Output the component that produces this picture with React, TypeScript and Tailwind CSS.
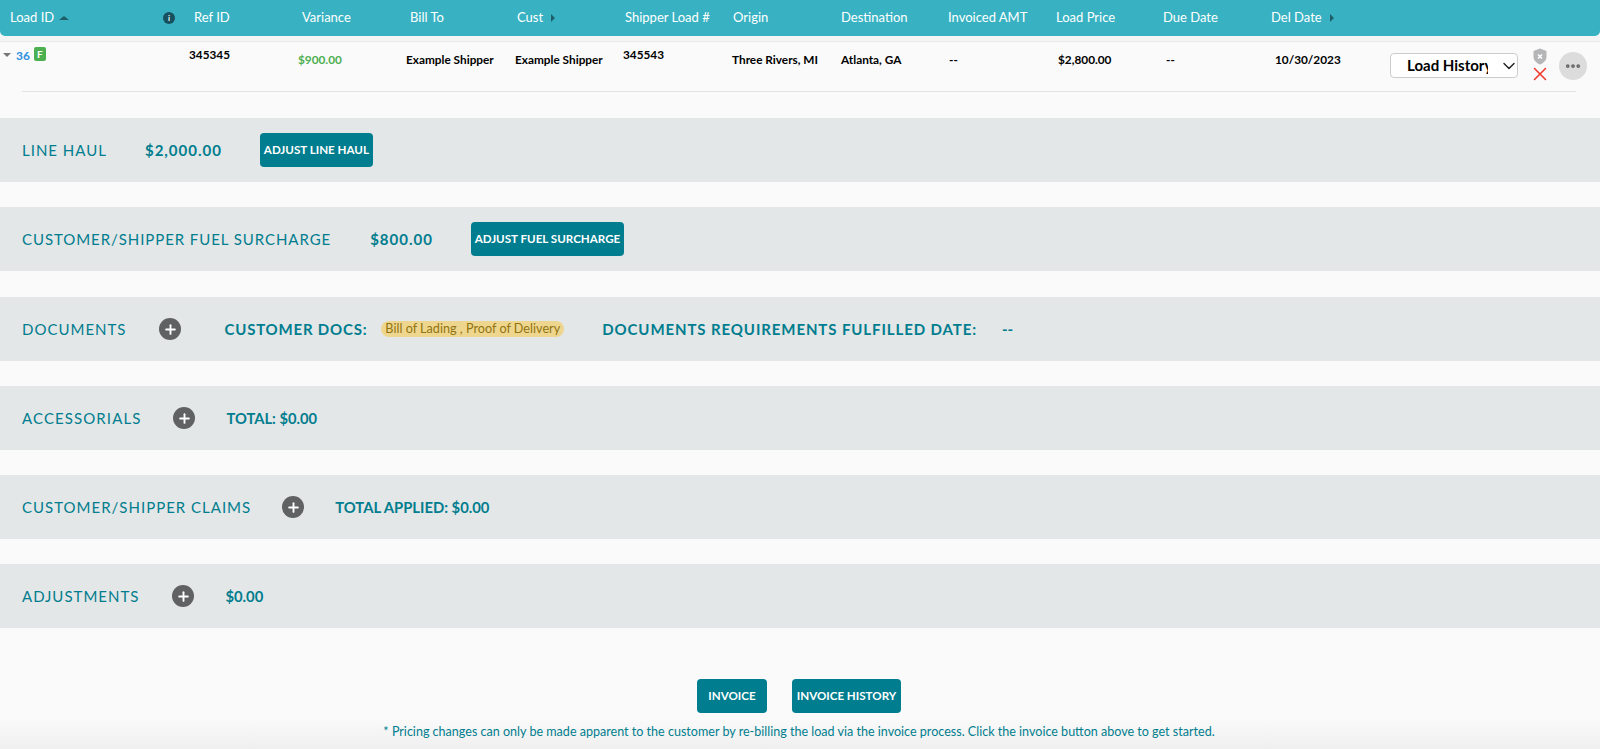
import { Plus, X, ChevronDown, MoreHorizontal } from "lucide-react";

const headCols = [
  { label: "Load ID", width: "w-[184px]", arrow: "up" },
  { label: "Ref ID", width: "w-[108px]" },
  { label: "Variance", width: "w-[108px]" },
  { label: "Bill To", width: "w-[107px]" },
  { label: "Cust", width: "w-[108px]", arrow: "right" },
  { label: "Shipper Load #", width: "w-[108px]" },
  { label: "Origin", width: "w-[108px]" },
  { label: "Destination", width: "w-[107px]" },
  { label: "Invoiced AMT", width: "w-[108px]" },
  { label: "Load Price", width: "w-[107px]" },
  { label: "Due Date", width: "w-[108px]" },
  { label: "Del Date", width: "w-[120px]", arrow: "right" },
];

const rowCols = [
  { value: "Example Shipper", width: "w-[109px]" },
  { value: "Example Shipper", width: "w-[108px]" },
];

const rowColsAfter = [
  { value: "Three Rivers, MI", width: "w-[109px]" },
  { value: "Atlanta, GA", width: "w-[108px]" },
  { value: "--", width: "w-[109px]" },
  { value: "$2,800.00", width: "w-[108px]" },
  { value: "--", width: "w-[109px]" },
  { value: "10/30/2023", width: "w-[115px]" },
];

function PlusButton() {
  return (
    <span className="flex h-[22px] w-[22px] shrink-0 items-center justify-center rounded-full bg-[#5f6163]">
      <Plus size={15} color="#fff" strokeWidth={3} />
    </span>
  );
}

function Band({ children }: { children: React.ReactNode }) {
  return (
    <div className="flex h-[64px] items-center bg-[#e3e7e8] pl-[22px] text-[#007d8e]">
      {children}
    </div>
  );
}

function BandLabel({ text, className }: { text: string; className: string }) {
  return <span className={`text-[15px] uppercase ${className}`}>{text}</span>;
}

function TealButton({ text, className }: { text: string; className: string }) {
  return (
    <button className={`h-[34px] rounded-[4px] bg-[#007d8e] text-[11.6px] font-bold text-white uppercase ${className}`}>
      {text}
    </button>
  );
}

export default function App() {
  return (
    <div className="relative h-[749px] overflow-hidden bg-[#fafafa] font-['Lato','Open_Sans',sans-serif]">
      <div className="flex h-[36px] items-center rounded-b-[5px] bg-[#38b2c2] pb-[1px] pl-[10px] text-[13px] text-white">
        {headCols.map((col) => (
          <div key={col.label} className={`relative flex shrink-0 items-center gap-[5px] ${col.width}`}>
            {col.label}
            {col.arrow === "up" && (
              <span className="h-0 w-0 border-x-[5px] border-b-[4px] border-x-transparent border-b-[#1f5f6b]" />
            )}
            {col.arrow === "right" && (
              <span className="ml-[3px] h-0 w-0 border-y-[4px] border-l-[4px] border-y-transparent border-l-[#1f5f6b]" />
            )}
            {col.label === "Load ID" && (
              <span className="absolute left-[153px] top-[4px] flex h-[12px] w-[12px] items-center justify-center rounded-full bg-[#17505e] text-[8px] font-bold leading-none text-white">
                i
              </span>
            )}
          </div>
        ))}
      </div>

      <div className="h-[6px] border-b border-[#e8eaea] bg-[#f3f4f4]" />

      <div className="ml-[22px] mr-[24px] flex h-[50px] border-b border-[#e2e4e4] text-[11.8px] font-bold text-black">
        <div className="ml-[-19px] flex w-[186px] shrink-0 items-start gap-[4px] pt-[5px]">
          <span className="mt-[6px] h-0 w-0 border-x-[4px] border-t-[4px] border-x-transparent border-t-[#777]" />
          <span className="ml-[1px] text-[12px] text-[#2f8fe0]">36</span>
          <span className="flex h-[14px] w-[12px] items-center justify-center rounded-[2px] bg-[#4caf50] text-[10px] leading-none text-white">
            F
          </span>
        </div>
        <div className="w-[109px] shrink-0 pt-[4px]">345345</div>
        <div className="w-[108px] shrink-0 pt-[9px] text-[#4caf50]">$900.00</div>
        {rowCols.map((col, i) => (
          <div key={i} className={`shrink-0 pt-[9px] ${col.width}`}>
            {col.value}
          </div>
        ))}
        <div className="w-[109px] shrink-0 pt-[4px]">345543</div>
        {rowColsAfter.map((col, i) => (
          <div key={i} className={`shrink-0 pt-[9px] ${col.width}`}>
            {col.value}
          </div>
        ))}
        <div className="relative mt-[11px] flex h-[25px] w-[128px] shrink-0 items-center overflow-hidden rounded-[4px] border border-[#ccc] bg-white pl-[16px] text-[15px]">
          <span className="w-[81px] overflow-hidden whitespace-nowrap">Load History</span>
          <ChevronDown className="absolute right-[-2px]" size={20} strokeWidth={1.7} color="#222" />
        </div>
        <div className="ml-[13px] flex w-[18px] shrink-0 flex-col items-center pt-[6px]">
          <svg width="14" height="17" viewBox="0 0 14 17">
            <path d="M7 0.5 L13.5 3 V8.5 C13.5 12.5 10.5 15 7 16.5 C3.5 15 0.5 12.5 0.5 8.5 V3 Z" fill="#b4b6b8" />
            <path d="M5 6.5 L9 10.5 M9 6.5 L5 10.5" stroke="#fff" strokeWidth="1.5" />
          </svg>
          <X size={22} color="#ef3b2c" strokeWidth={1.7} className="mt-[-2px]" />
        </div>
        <div className="ml-[10px] mt-[10px] flex h-[28px] w-[28px] shrink-0 items-center justify-center rounded-full bg-[#dcdcdc]">
          <MoreHorizontal size={18} color="#666" strokeWidth={3} />
        </div>
      </div>

      <div className="mt-[26px] flex flex-col gap-[25px]">
        <Band>
          <BandLabel text="Line Haul" className="mr-[38px] tracking-[1px]" />
          <span className="mr-[38px] text-[15px] font-bold tracking-[1px]">$2,000.00</span>
          <TealButton text="Adjust Line Haul" className="w-[113px]" />
        </Band>
        <Band>
          <BandLabel text="Customer/Shipper Fuel Surcharge" className="mr-[39px] tracking-[0.93px]" />
          <span className="mr-[38px] text-[15px] font-bold tracking-[1px]">$800.00</span>
          <TealButton text="Adjust Fuel Surcharge" className="w-[153px]" />
        </Band>
        <div className="mt-[1px]">
          <Band>
            <BandLabel text="Documents" className="mr-[33px] tracking-[1px]" />
            <PlusButton />
            <span className="ml-[43px] mr-[14px] text-[15px] font-bold tracking-[0.8px] uppercase">Customer Docs:</span>
            <span className="rounded-full bg-[#efd68e] px-[4px] text-[12.65px] leading-[16px] text-[#8f7410]">
              Bill of Lading , Proof of Delivery
            </span>
            <span className="ml-[38px] text-[15px] font-bold tracking-[0.9px] uppercase">
              Documents Requirements Fulfilled Date:
            </span>
            <span className="ml-[25px] text-[15px] font-bold">--</span>
          </Band>
        </div>
        <Band>
          <BandLabel text="Accessorials" className="mr-[32px] tracking-[1.1px]" />
          <PlusButton />
          <span className="ml-[31px] text-[14.7px] font-bold uppercase">Total: $0.00</span>
        </Band>
        <Band>
          <BandLabel text="Customer/Shipper Claims" className="mr-[31px] tracking-[1px]" />
          <PlusButton />
          <span className="ml-[31px] text-[14.8px] font-bold uppercase">Total Applied: $0.00</span>
        </Band>
        <Band>
          <BandLabel text="Adjustments" className="mr-[33px] tracking-[1px]" />
          <PlusButton />
          <span className="ml-[31px] text-[14.8px] font-bold">$0.00</span>
        </Band>
      </div>

      <div className="mt-[51px] flex justify-center gap-[25px] pr-[2px]">
        <TealButton text="Invoice" className="w-[70px]" />
        <TealButton text="Invoice History" className="w-[109px]" />
      </div>
      <p className="relative z-10 mt-[10px] pr-[2px] text-center text-[12.55px] text-[#007d8e]">
        * Pricing changes can only be made apparent to the customer by re-billing the load via the invoice process. Click the invoice button above to get started.
      </p>

      <div className="pointer-events-none absolute inset-x-0 bottom-0 h-[30px] bg-gradient-to-b from-transparent to-[#efefef]" />
    </div>
  );
}
